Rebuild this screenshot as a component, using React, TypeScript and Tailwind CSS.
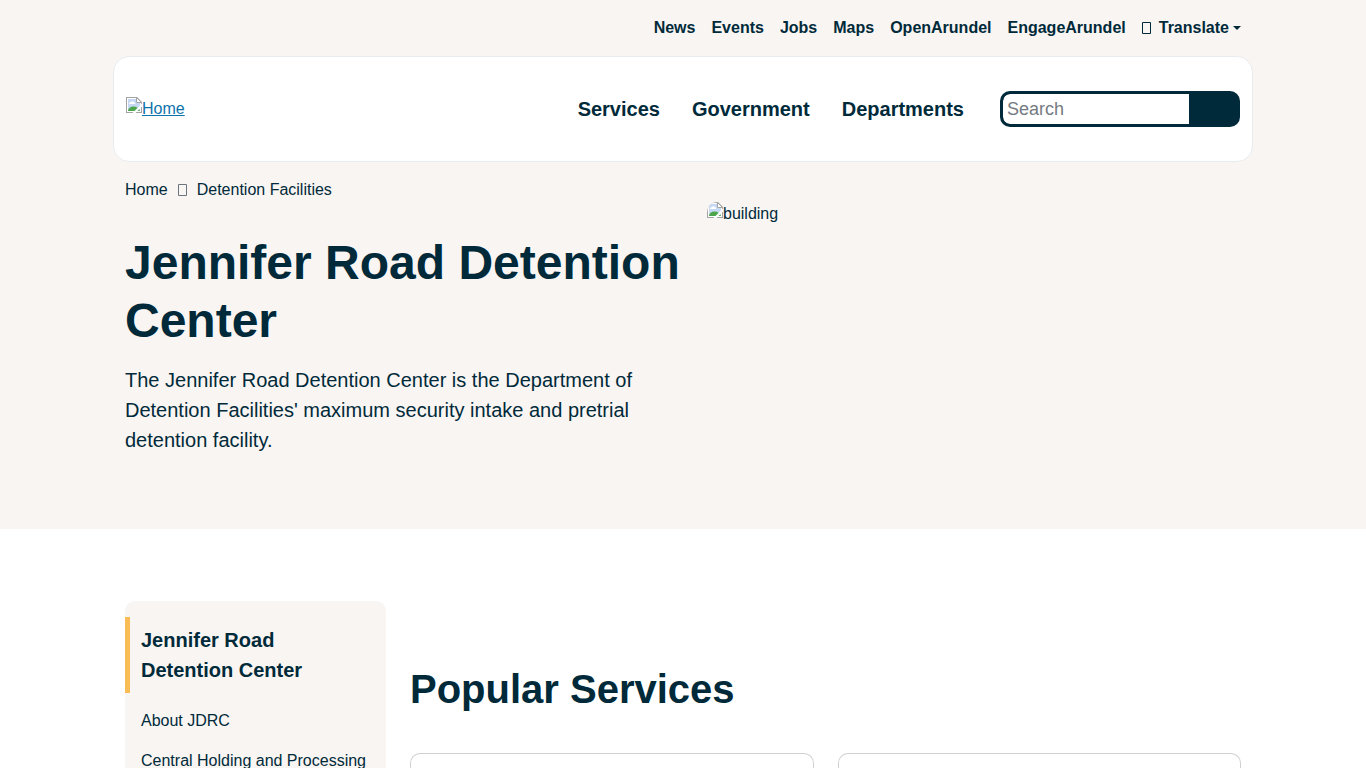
import React from 'react';

const topLinks = ['News', 'Events', 'Jobs', 'Maps', 'OpenArundel', 'EngageArundel'];
const mainLinks = ['Services', 'Government', 'Departments'];
const sideLinks = ['About JDRC', 'Central Holding and Processing'];

const MissingGlyph = ({ className }: { className: string }) => (
  <svg viewBox="0 0 9 12" className={className} fill="none" stroke="currentColor" aria-hidden="true">
    <path d="M0.5 0.5h8v11h-8z" />
  </svg>
);

const BrokenImage = ({ className = '' }: { className?: string }) => (
  <svg viewBox="0 0 16 16" className={`h-4 w-4 shrink-0 ${className}`} aria-hidden="true">
    <path d="M0 0H11L16 5V16H0Z" fill="#a3a3a3" />
    <path d="M1 1H10.5L15 5.5V15H1Z" fill="#fff" />
    <path d="M2 2H10V6H14V14H2Z" fill="#c6d8f3" />
    <path d="M3 7c0-1.2.8-2 2-2c.6-1.2 2.6-1.2 3 .3c1 .1 1.4.8 1.2 1.7z" fill="#fff" />
    <path d="M2 14c0-2.6 2.6-4.6 5.5-4.6c2.900 0 5.500 1.600 6.500 4.600z" fill="#4ea64c" />
    <path d="M16 6.500V9.500L9.500 16H6.500Z" fill="#fff" />
    <path d="M10.500 0.500V5.500H15.500Z" fill="#fff" stroke="#a3a3a3" />
  </svg>
);

const App = () => {
  return (
    <div className="min-h-screen bg-white font-['Liberation_Sans',Arial,sans-serif] text-base text-[#002a3a]">
      <div className="bg-[#f9f5f2] pb-[74px]">
        <div className="max-w-[1140px] mx-auto">
          {/* Utility nav */}
          <nav aria-label="Utility" className="flex h-14 items-center justify-end gap-4 px-3 font-bold">
            {topLinks.map((link) => (
              <a key={link} href="#">{link}</a>
            ))}
            <button type="button" className="flex items-center font-bold">
              <MissingGlyph className="mr-2 h-3 w-[9px]" />
              Translate
              <svg viewBox="0 0 8 4" className="ml-1 h-1 w-2" fill="currentColor" aria-hidden="true">
                <path d="M0 0h8L4 4z" />
              </svg>
            </button>
          </nav>

          {/* Header */}
          <header className="flex h-[106px] items-center justify-between rounded-2xl border border-[#e9ecef] bg-white px-3">
            <a href="#" className="flex items-start text-[#0e73ac]">
              <BrokenImage />
              <span className="underline">Home</span>
            </a>
            <div className="flex items-center gap-9">
              <nav aria-label="Main" className="flex gap-8 text-xl font-bold">
                {mainLinks.map((link) => (
                  <a key={link} href="#">{link}</a>
                ))}
              </nav>
              <form className="flex h-9 w-60 overflow-hidden rounded-[10px] border-3 border-[#002a3a] bg-[#002a3a]">
                <input
                  type="text"
                  aria-label="Search"
                  placeholder="Search"
                  className="min-w-0 flex-1 rounded-l-[7px] bg-white px-1 text-lg outline-none placeholder:text-[#757b82]"
                />
                <button type="submit" aria-label="Submit search" className="w-12 bg-[#002a3a]" />
              </form>
            </div>
          </header>

          {/* Breadcrumb */}
          <nav aria-label="Breadcrumb" className="flex items-center px-3 pt-4">
            <a href="#">Home</a>
            <MissingGlyph className="mx-[10px] h-3 w-[9px] text-[#6c757d]" />
            <a href="#">Detention Facilities</a>
          </nav>

          {/* Hero */}
          <div className="grid grid-cols-2">
            <div className="pt-8 pl-3">
              <h1 className="text-[48px] leading-[58px] font-bold">Jennifer Road Detention Center</h1>
              <p className="mt-[15px] pr-3 text-xl leading-[30px]">
                The Jennifer Road Detention Center is the Department of Detention Facilities' maximum security intake and
                pretrial detention facility.
              </p>
            </div>
            <div className="flex items-start pl-6">
              <BrokenImage className="rounded-tl-[10px]" />
              <span>building</span>
            </div>
          </div>
        </div>
      </div>

      {/* Content */}
      <div className="max-w-[1140px] mx-auto grid grid-cols-4 pt-[72px]">
        <aside className="px-3">
          <nav aria-label="Section" className="rounded-t-[10px] bg-[#f9f5f2] pt-4">
            <a href="#" className="block border-l-5 border-[#fabd55] py-2 pr-4 pl-[11px] text-xl leading-[30px] font-bold">
              Jennifer Road Detention Center
            </a>
            <ul className="pt-2">
              {sideLinks.map((link) => (
                <li key={link}>
                  <a href="#" className="block px-4 py-2">{link}</a>
                </li>
              ))}
            </ul>
          </nav>
        </aside>

        <main className="col-span-3 px-3 pt-16">
          <h2 className="text-[40px] leading-[48px] font-bold">Popular Services</h2>
          <div className="mt-10 grid grid-cols-2 gap-6">
            <div className="h-10 rounded-t-[10px] border border-b-0 border-[#ced0d2] bg-white" />
            <div className="h-10 rounded-t-[10px] border border-b-0 border-[#ced0d2] bg-white" />
          </div>
        </main>
      </div>
    </div>
  );
};

export default App;
